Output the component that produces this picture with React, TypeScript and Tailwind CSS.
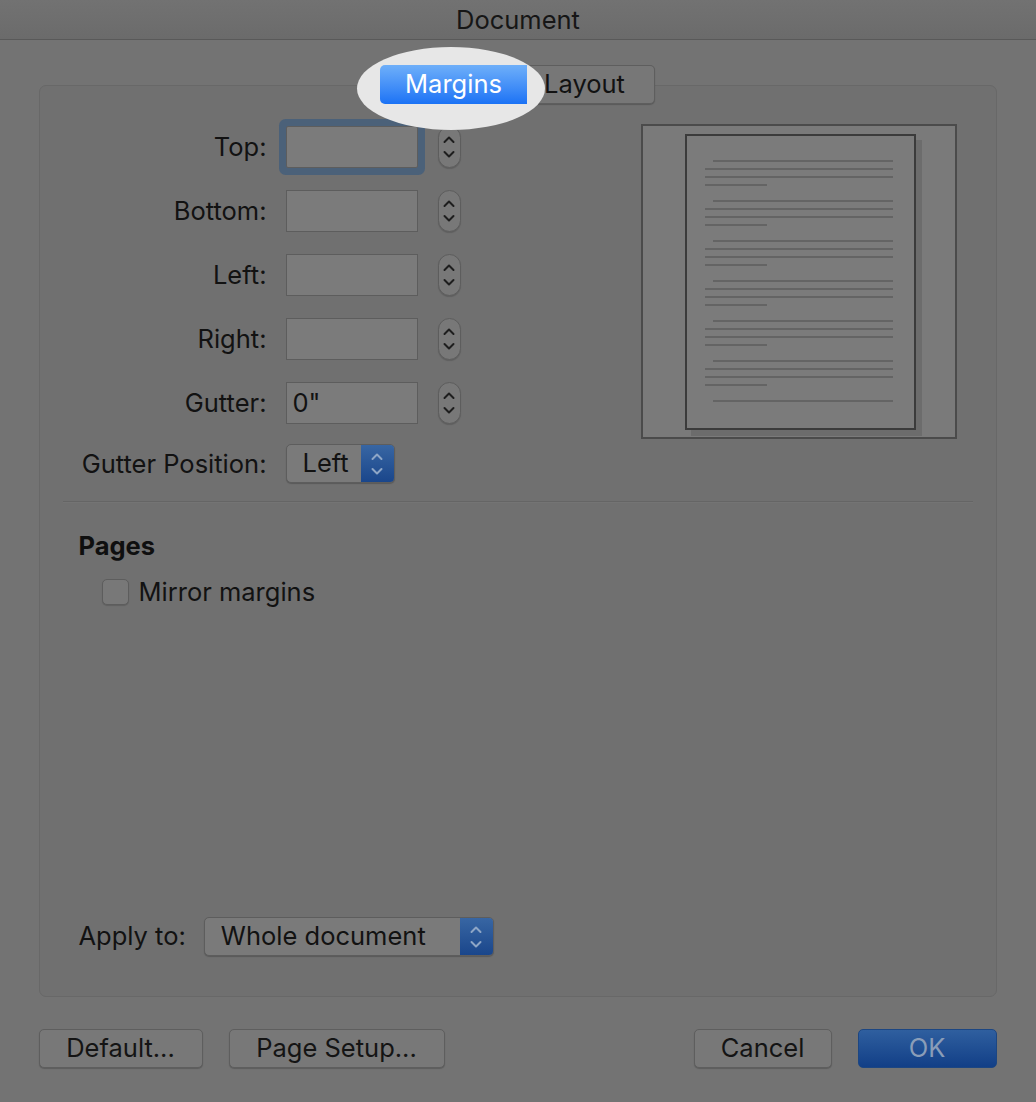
import React from "react";

const font = "font-['Inter','Liberation_Sans',sans-serif]";

function Chevrons({ color = "#1e1e1e" }: { color?: string }) {
  return (
    <svg width="12" height="26" viewBox="0 0 12 26" fill="none">
      <path d="M1.5 8 L6 3.5 L10.5 8" stroke={color} strokeWidth="2" strokeLinecap="round" strokeLinejoin="round" />
      <path d="M1.5 18 L6 22.5 L10.5 18" stroke={color} strokeWidth="2" strokeLinecap="round" strokeLinejoin="round" />
    </svg>
  );
}

function Stepper() {
  return (
    <div className="w-[23px] h-[42px] rounded-full border border-[#5d5d5d] bg-[#787878] shadow-[0_1px_1px_rgba(0,0,0,0.15)] flex items-center justify-center">
      <Chevrons />
    </div>
  );
}

function Row({ label, value, focused }: { label: string; value?: string; focused?: boolean }) {
  return (
    <div className="flex items-center h-[42px]">
      <div className="w-[188px] text-right text-[25.5px] text-[#121212] leading-none">{label}</div>
      <div className="ml-[19px] w-[132px] h-[42px] relative">
        <div
          className={
            "w-full h-full border border-[#5d5d5d] bg-[#7b7b7b] flex items-center px-[6px] text-[25.5px] text-[#121212] " +
            (focused ? "shadow-[0_0_0_7px_#4b6179] rounded-[2px]" : "")
          }
        >
          {value}
        </div>
      </div>
      <div className="ml-[20px]">
        <Stepper />
      </div>
    </div>
  );
}

function Popup({ text, width }: { text: string; width: string }) {
  return (
    <div className={"h-[39px] flex rounded-[5px] border border-[#5d5d5d] bg-[#7a7a7a] shadow-[0_1px_1px_rgba(0,0,0,0.2)] overflow-hidden " + width}>
      <div className="flex-1 flex items-center pl-[16px] text-[25.5px] text-[#121212]">{text}</div>
      <div className="w-[33px] h-full bg-gradient-to-b from-[#3866a3] to-[#1a468b] flex items-center justify-center">
        <Chevrons color="#8ea6c6" />
      </div>
    </div>
  );
}

function PagePreview() {
  const groups = [0, 1, 2, 3, 4, 5];
  return (
    <div className="w-[316px] h-[315px] border-2 border-[#4b4b4b] bg-[#7a7a7a] pl-[42px] pt-[8px]">
      <svg width="240" height="305" viewBox="0 0 240 305">
        <rect x="6" y="6" width="231" height="296" fill="#6c6c6c" />
        <rect x="1" y="1" width="229" height="294" fill="#7b7b7b" stroke="#3b3b3b" strokeWidth="2" />
        {groups.map((g) => {
          const y = 26 + g * 40;
          return (
            <g key={g} fill="#646464">
              <rect x="28" y={y} width="180" height="2" />
              <rect x="20" y={y + 8} width="188" height="2" />
              <rect x="20" y={y + 16} width="188" height="2" />
              <rect x="20" y={y + 24} width="62" height="2" />
            </g>
          );
        })}
        <rect x="28" y={26 + 6 * 40} width="180" height="2" fill="#646464" />
      </svg>
    </div>
  );
}

function Button({ children, w, primary }: { children: React.ReactNode; w: string; primary?: boolean }) {
  return (
    <div
      className={
        "h-[39px] rounded-[5px] flex items-center justify-center text-[25.5px] " +
        w +
        (primary
          ? " bg-gradient-to-b from-[#2f5f9f] to-[#123f87] text-[#8a9db8] border border-[#1c4682]"
          : " bg-[#787878] border border-[#5e5e5e] text-[#141414] shadow-[0_1px_1px_rgba(0,0,0,0.2)]")
      }
    >
      {children}
    </div>
  );
}

export default function App() {
  return (
    <div className={"w-[1036px] h-[1102px] bg-[#737373] relative overflow-hidden " + font}>
      {/* title bar */}
      <div className="h-[40px] bg-gradient-to-b from-[#727272] to-[#6b6b6b] border-b border-[#595959] flex items-center justify-center">
        <span className="text-[25.5px] text-[#161616] leading-none">Document</span>
      </div>

      {/* spotlight */}
      <div className="absolute left-[357px] top-[47px] w-[188px] h-[83px] rounded-[50%] bg-[#e7e7e7] z-10" />

      <div className="flex flex-col items-center mt-[25px]">
        {/* tabs */}
        <div className="flex h-[39px] relative -ml-[1px]">
          <div className="relative z-20 w-[147px] h-[39px] rounded-l-[5px] bg-gradient-to-b from-[#6eaff9] to-[#1a72f5] flex items-center justify-center text-white text-[25.5px]">
            Margins
          </div>
          <div className="w-[128px] h-[39px] rounded-r-[5px] bg-[#777777] border border-l-0 border-[#5e5e5e] shadow-[0_1px_1px_rgba(0,0,0,0.2)] flex items-center justify-center pr-[12px] text-[#121212] text-[25.5px]">
            Layout
          </div>
        </div>

        {/* panel */}
        <div className="-mt-[19px] -ml-[1px] w-[958px] h-[912px] rounded-[7px] bg-[#707070] border border-[#686868] px-[39px] pt-[38px] pb-[40px] flex flex-col">
          <div className="flex justify-between">
            <div className="pt-[2px] flex flex-col">
              <div className="flex flex-col gap-[22px]">
                <Row label="Top:" focused />
                <Row label="Bottom:" />
                <Row label="Left:" />
                <Row label="Right:" />
                <Row label="Gutter:" value={'0"'} />
              </div>
              <div className="flex items-center mt-[20px]">
                <div className="w-[188px] text-right text-[25.5px] text-[#121212] leading-none">Gutter Position:</div>
                <div className="ml-[19px]">
                  <Popup text="Left" width="w-[109px]" />
                </div>
              </div>
            </div>
            <PagePreview />
          </div>

          <div className="-mx-[16px] mt-[18px] h-[2px] border-t border-[#656565] border-b border-b-[#747474]" />

          <div className="mt-[28px] font-bold text-[25.5px] text-[#0f0f0f] leading-[30px]">Pages</div>
          <div className="mt-[12px] ml-[23px] flex items-center">
            <div className="w-[27px] h-[26px] rounded-[5px] border border-[#5d5d5d] bg-[#787878] shadow-[0_1px_1px_rgba(0,0,0,0.15)]" />
            <span className="ml-[10px] text-[25.5px] text-[#121212]">Mirror margins</span>
          </div>

          <div className="mt-auto flex items-center">
            <span className="text-[25.5px] text-[#121212]">Apply to:</span>
            <div className="ml-[18px]">
              <Popup text="Whole document" width="w-[290px]" />
            </div>
          </div>
        </div>

        {/* buttons */}
        <div className="w-[958px] -ml-[1px] mt-[32px] flex items-center">
          <Button w="w-[164px]">Default...</Button>
          <div className="ml-[26px]">
            <Button w="w-[216px]">Page Setup...</Button>
          </div>
          <div className="ml-auto">
            <Button w="w-[138px]">Cancel</Button>
          </div>
          <div className="ml-[26px]">
            <Button w="w-[139px]" primary>OK</Button>
          </div>
        </div>
      </div>
    </div>
  );
}
